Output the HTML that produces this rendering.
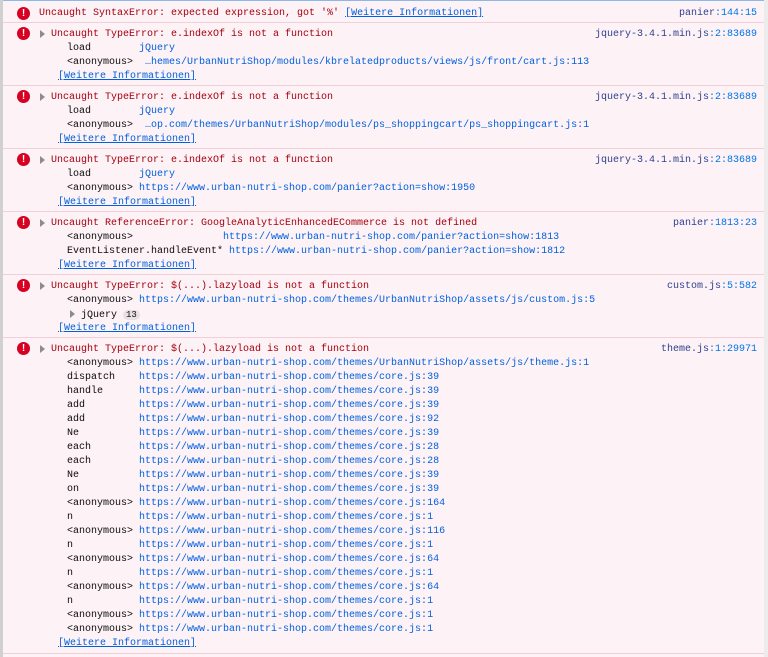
<!DOCTYPE html>
<html><head><style>
body{margin:0;width:768px;height:657px;background:#fdf2f5;position:relative;overflow:hidden;font-family:"Liberation Mono",monospace;font-size:10px}
.l{position:absolute;height:14px;line-height:14px;white-space:pre;margin-top:2px}
.e{color:#a4000f}.b{color:#0060df}.k{color:#0c0c0d}
.s{position:absolute;right:11px;height:14px;line-height:14px;color:#2e3f8f;white-space:pre;margin-top:2px}.s i{font-style:normal;color:#0074e8}
.w{color:#0060df;text-decoration:underline}
.sep{position:absolute;left:3px;right:4px;height:1px;background:#f3cfd7}
.ic{position:absolute;left:17px;width:13px;height:13px;border-radius:50%;background:#d70022;color:#fff;font:bold 10px "Liberation Sans",sans-serif;text-align:center;line-height:13px;margin-top:1px}
.t{position:absolute;left:40px;width:0;height:0;border-left:5px solid #8c8c8c;border-top:4px solid transparent;border-bottom:4px solid transparent;margin-top:1px}
</style></head><body>
<div style="position:absolute;left:0;top:0;width:3px;height:657px;background:#d0d0d0"></div>
<div style="position:absolute;right:0;top:0;width:4px;height:657px;background:#ececec"></div>
<div style="position:absolute;left:3px;right:4px;top:0;height:1px;background:#8cb8e8"></div>

<div class="ic" style="top:6px">!</div>
<div class="l e" style="left:39px;top:5px">Uncaught SyntaxError: expected expression, got '%' <span class="w">[Weitere Informationen]</span></div>
<div class="s" style="top:5px">panier<i>:144:15</i></div>
<div class="sep" style="top:22px"></div>

<div class="ic" style="top:26px">!</div><div class="t" style="top:29px"></div>
<div class="l e" style="left:51px;top:26px">Uncaught TypeError: e.indexOf is not a function</div>
<div class="s" style="top:26px">jquery-3.4.1.min.js<i>:2:83689</i></div>
<div class="l" style="left:67px;top:40px"><span class="k">load        </span><span class="b">jQuery</span></div>
<div class="l" style="left:67px;top:54px"><span class="k">&lt;anonymous&gt;  </span><span class="b">…hemes/UrbanNutriShop/modules/kbrelatedproducts/views/js/front/cart.js:113</span></div>
<div class="l w" style="left:58px;top:68px">[Weitere Informationen]</div>
<div class="sep" style="top:85px"></div>

<div class="ic" style="top:89px">!</div><div class="t" style="top:92px"></div>
<div class="l e" style="left:51px;top:89px">Uncaught TypeError: e.indexOf is not a function</div>
<div class="s" style="top:89px">jquery-3.4.1.min.js<i>:2:83689</i></div>
<div class="l" style="left:67px;top:103px"><span class="k">load        </span><span class="b">jQuery</span></div>
<div class="l" style="left:67px;top:117px"><span class="k">&lt;anonymous&gt;  </span><span class="b">…op.com/themes/UrbanNutriShop/modules/ps_shoppingcart/ps_shoppingcart.js:1</span></div>
<div class="l w" style="left:58px;top:131px">[Weitere Informationen]</div>
<div class="sep" style="top:148px"></div>

<div class="ic" style="top:152px">!</div><div class="t" style="top:155px"></div>
<div class="l e" style="left:51px;top:152px">Uncaught TypeError: e.indexOf is not a function</div>
<div class="s" style="top:152px">jquery-3.4.1.min.js<i>:2:83689</i></div>
<div class="l" style="left:67px;top:166px"><span class="k">load        </span><span class="b">jQuery</span></div>
<div class="l" style="left:67px;top:180px"><span class="k">&lt;anonymous&gt; </span><span class="b">https://www.urban-nutri-shop.com/panier?action=show:1950</span></div>
<div class="l w" style="left:58px;top:194px">[Weitere Informationen]</div>
<div class="sep" style="top:211px"></div>

<div class="ic" style="top:215px">!</div><div class="t" style="top:218px"></div>
<div class="l e" style="left:51px;top:215px">Uncaught ReferenceError: GoogleAnalyticEnhancedECommerce is not defined</div>
<div class="s" style="top:215px">panier<i>:1813:23</i></div>
<div class="l" style="left:67px;top:229px"><span class="k">&lt;anonymous&gt;               </span><span class="b">https://www.urban-nutri-shop.com/panier?action=show:1813</span></div>
<div class="l" style="left:67px;top:243px"><span class="k">EventListener.handleEvent* </span><span class="b">https://www.urban-nutri-shop.com/panier?action=show:1812</span></div>
<div class="l w" style="left:58px;top:257px">[Weitere Informationen]</div>
<div class="sep" style="top:274px"></div>

<div class="ic" style="top:278px">!</div><div class="t" style="top:281px"></div>
<div class="l e" style="left:51px;top:278px">Uncaught TypeError: $(...).lazyload is not a function</div>
<div class="s" style="top:278px">custom.js<i>:5:582</i></div>
<div class="l" style="left:67px;top:292px"><span class="k">&lt;anonymous&gt; </span><span class="b">https://www.urban-nutri-shop.com/themes/UrbanNutriShop/assets/js/custom.js:5</span></div>
<div class="t" style="left:70px;top:309px"></div>
<div class="l k" style="left:81px;top:306px">jQuery <span style="background:#e8e0e3;border-radius:7px;padding:0 3px;font-size:9px">13</span></div>
<div class="l w" style="left:58px;top:320px">[Weitere Informationen]</div>
<div class="sep" style="top:337px"></div>

<div class="ic" style="top:341px">!</div><div class="t" style="top:344px"></div>
<div class="l e" style="left:51px;top:341px">Uncaught TypeError: $(...).lazyload is not a function</div>
<div class="s" style="top:341px">theme.js<i>:1:29971</i></div>
<div class="l" style="left:67px;top:355px;line-height:14px"><span class="k">&lt;anonymous&gt; </span><span class="b">https://www.urban-nutri-shop.com/themes/UrbanNutriShop/assets/js/theme.js:1</span></div>
<div class="l" style="left:67px;top:369px;height:auto"><span class="k">dispatch    </span><span class="b">https://www.urban-nutri-shop.com/themes/core.js:39</span>
<span class="k">handle      </span><span class="b">https://www.urban-nutri-shop.com/themes/core.js:39</span>
<span class="k">add         </span><span class="b">https://www.urban-nutri-shop.com/themes/core.js:39</span>
<span class="k">add         </span><span class="b">https://www.urban-nutri-shop.com/themes/core.js:92</span>
<span class="k">Ne          </span><span class="b">https://www.urban-nutri-shop.com/themes/core.js:39</span>
<span class="k">each        </span><span class="b">https://www.urban-nutri-shop.com/themes/core.js:28</span>
<span class="k">each        </span><span class="b">https://www.urban-nutri-shop.com/themes/core.js:28</span>
<span class="k">Ne          </span><span class="b">https://www.urban-nutri-shop.com/themes/core.js:39</span>
<span class="k">on          </span><span class="b">https://www.urban-nutri-shop.com/themes/core.js:39</span>
<span class="k">&lt;anonymous&gt; </span><span class="b">https://www.urban-nutri-shop.com/themes/core.js:164</span>
<span class="k">n           </span><span class="b">https://www.urban-nutri-shop.com/themes/core.js:1</span>
<span class="k">&lt;anonymous&gt; </span><span class="b">https://www.urban-nutri-shop.com/themes/core.js:116</span>
<span class="k">n           </span><span class="b">https://www.urban-nutri-shop.com/themes/core.js:1</span>
<span class="k">&lt;anonymous&gt; </span><span class="b">https://www.urban-nutri-shop.com/themes/core.js:64</span>
<span class="k">n           </span><span class="b">https://www.urban-nutri-shop.com/themes/core.js:1</span>
<span class="k">&lt;anonymous&gt; </span><span class="b">https://www.urban-nutri-shop.com/themes/core.js:64</span>
<span class="k">n           </span><span class="b">https://www.urban-nutri-shop.com/themes/core.js:1</span>
<span class="k">&lt;anonymous&gt; </span><span class="b">https://www.urban-nutri-shop.com/themes/core.js:1</span>
<span class="k">&lt;anonymous&gt; </span><span class="b">https://www.urban-nutri-shop.com/themes/core.js:1</span></div>
<div class="l w" style="left:58px;top:635px">[Weitere Informationen]</div>
<div class="sep" style="top:653px"></div>
</body></html>
